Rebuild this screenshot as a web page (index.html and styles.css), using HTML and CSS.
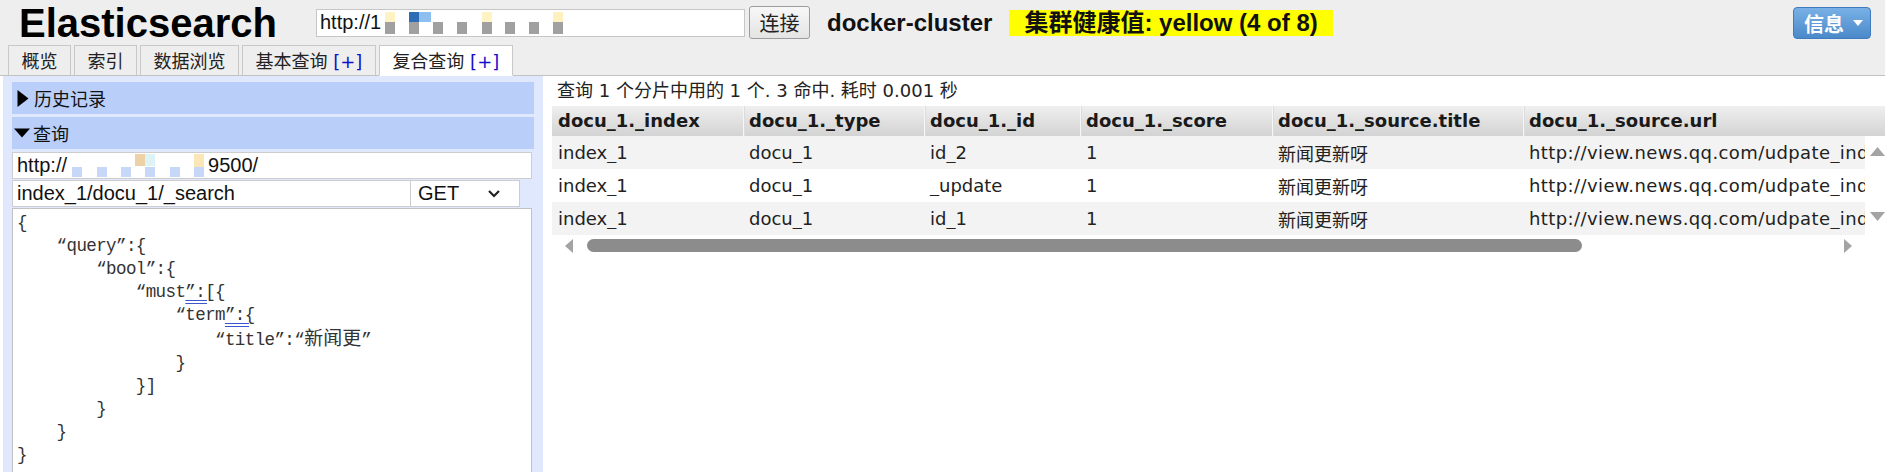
FILE: index.html
```html
<!DOCTYPE html>
<html lang="zh-CN">
<head>
<meta charset="utf-8">
<title>Elasticsearch</title>
<link rel="stylesheet" href="styles.css">
</head>
<body>
<div class="header">
  <div class="topbar">
    <h1 class="logo">Elasticsearch</h1>
    <div class="conn-input">http://1<svg class="mosaic-top" width="190" height="26" viewBox="0 0 190 26">
      <rect x="4" y="2" width="10" height="10" fill="#fff3c4"/>
      <rect x="28" y="2" width="10" height="10" fill="#2d6db5"/>
      <rect x="38" y="2" width="12" height="10" fill="#8ec0ef"/>
      <rect x="101" y="2" width="10" height="10" fill="#fff3c4"/>
      <rect x="172" y="2" width="10" height="10" fill="#fff0bf"/>
      <rect x="4" y="12" width="10" height="12" fill="#a0a0a0"/>
      <rect x="28" y="12" width="10" height="12" fill="#a0a0a0"/>
      <rect x="52" y="12" width="10" height="12" fill="#a0a0a0"/>
      <rect x="76" y="12" width="10" height="12" fill="#a0a0a0"/>
      <rect x="101" y="12" width="10" height="12" fill="#a0a0a0"/>
      <rect x="124" y="12" width="10" height="12" fill="#a0a0a0"/>
      <rect x="148" y="12" width="10" height="12" fill="#a0a0a0"/>
      <rect x="172" y="12" width="10" height="12" fill="#a0a0a0"/>
    </svg></div>
    <button class="btn-connect">连接</button>
    <span class="cluster-name">docker-cluster</span>
    <span class="health">集群健康值: yellow (4 of 8)</span>
    <button class="btn-info">信息<svg class="caret" width="10" height="6" viewBox="0 0 10 6"><path d="M0 0 L10 0 L5 6 Z" fill="#fff"/></svg></button>
  </div>
  <div class="tabs">
    <div class="tab">概览</div>
    <div class="tab">索引</div>
    <div class="tab">数据浏览</div>
    <div class="tab">基本查询 <span class="plus">[+]</span></div>
    <div class="tab active">复合查询 <span class="plus">[+]</span></div>
  </div>
</div>

<div class="main">
  <div class="side">
    <div class="section"><svg class="tri tri-right" width="12" height="17" viewBox="0 0 12 17"><path d="M0.5 0 L11.5 8.5 L0.5 17 Z" fill="#000"/></svg>历史记录</div>
    <div class="section"><svg class="tri tri-down" width="16" height="10" viewBox="0 0 16 10"><path d="M0 0.5 L16 0.5 L8 9.5 Z" fill="#000"/></svg>查询</div>
    <div class="field url">http://<svg class="mosaic-left" width="141" height="25" viewBox="0 0 141 25">
      <rect x="5" y="14" width="10" height="10" fill="#c6d7f8"/>
      <rect x="30" y="14" width="10" height="10" fill="#c6d7f8"/>
      <rect x="54" y="14" width="10" height="10" fill="#c6d7f8"/>
      <rect x="78" y="14" width="10" height="10" fill="#c6d7f8"/>
      <rect x="103" y="14" width="10" height="10" fill="#c6d7f8"/>
      <rect x="127" y="14" width="10" height="10" fill="#c6d7f8"/>
      <rect x="68" y="1" width="10" height="12" fill="#ecd2a6"/>
      <rect x="78" y="1" width="10" height="12" fill="#def3f5"/>
      <rect x="127" y="1" width="10" height="13" fill="#fbe6b8"/>
    </svg>9500/</div>
    <div class="path-row">
      <div class="field path">index_1/docu_1/_search</div>
      <div class="select">GET<svg class="chev" width="14" height="9" viewBox="0 0 14 9"><path d="M2 2 L7 7 L12 2" fill="none" stroke="#222" stroke-width="2.2"/></svg></div>
    </div>
<pre class="editor">{
    “query”:{
        “bool”:{
            “must<span class="ul">”:[</span>{
                “term<span class="ul">”:{</span>
                    “title”:“<span class="cjk">新闻更</span>”
                }
            }]
        }
    }
}</pre>
  </div>

  <div class="results">
    <div class="status">查询 1 个分片中用的 1 个. 3 命中. 耗时 0.001 秒</div>
    <div class="table">
      <div class="row head">
        <div class="cell">docu_1._index</div>
        <div class="cell">docu_1._type</div>
        <div class="cell">docu_1._id</div>
        <div class="cell">docu_1._score</div>
        <div class="cell">docu_1._source.title</div>
        <div class="cell">docu_1._source.url</div>
      </div>
      <div class="body-area">
        <div class="rows">
          <div class="row odd">
            <div class="cell">index_1</div>
            <div class="cell">docu_1</div>
            <div class="cell">id_2</div>
            <div class="cell">1</div>
            <div class="cell">新闻更新呀</div>
            <div class="cell url-cell">http://view.news.qq.com/udpate_index</div>
          </div>
          <div class="row">
            <div class="cell">index_1</div>
            <div class="cell">docu_1</div>
            <div class="cell">_update</div>
            <div class="cell">1</div>
            <div class="cell">新闻更新呀</div>
            <div class="cell url-cell">http://view.news.qq.com/udpate_index</div>
          </div>
          <div class="row odd">
            <div class="cell">index_1</div>
            <div class="cell">docu_1</div>
            <div class="cell">id_1</div>
            <div class="cell">1</div>
            <div class="cell">新闻更新呀</div>
            <div class="cell url-cell">http://view.news.qq.com/udpate_index</div>
          </div>
        </div>
        <div class="vscroll">
          <svg width="15" height="9" viewBox="0 0 15 9"><path d="M0 9 L7.5 0 L15 9 Z" fill="#a3a3a3"/></svg>
          <svg width="15" height="9" viewBox="0 0 15 9"><path d="M0 0 L15 0 L7.5 9 Z" fill="#a3a3a3"/></svg>
        </div>
      </div>
      <div class="hscroll">
        <svg width="8" height="14" viewBox="0 0 8 14"><path d="M8 0 L0 7 L8 14 Z" fill="#a3a3a3"/></svg>
        <div class="thumb"></div>
        <svg class="right-arrow" width="8" height="14" viewBox="0 0 8 14"><path d="M0 0 L8 7 L0 14 Z" fill="#a3a3a3"/></svg>
      </div>
    </div>
  </div>
</div>
</body>
</html>
```

FILE: styles.css
```css
* { box-sizing: border-box; }

html, body {
  margin: 0;
  padding: 0;
  overflow: hidden;
  background: #fff;
}

body {
  width: 1885px;
  height: 472px;
  font-family: "DejaVu Sans", "Noto Sans CJK SC", sans-serif;
  font-size: 18px;
  color: #222;
}

/* ---------- header ---------- */
.header {
  background: #eeeeee;
  border-bottom: 1px solid #c2c2c2;
  height: 76px;
}

.topbar {
  display: flex;
  align-items: center;
  height: 45px;
  padding-left: 19px;
}

.logo {
  margin: 0;
  flex: 0 0 297px;
  font: bold 40px/44px "Liberation Sans", "Noto Sans CJK SC", sans-serif;
  color: #000;
}

.conn-input {
  display: flex;
  align-items: center;
  width: 429px;
  height: 28px;
  background: #fff;
  border: 1px solid #c6c6c6;
  padding-left: 3px;
  font: 20px "Liberation Sans", sans-serif;
  color: #111;
}

.mosaic-top { display: block; }

.btn-connect {
  margin-left: 4px;
  width: 61px;
  height: 33px;
  padding: 0;
  border: 1px solid #9c9c9c;
  border-radius: 3px;
  background: linear-gradient(#f7f7f7, #e4e4e4);
  font: 20px "Noto Sans CJK SC", sans-serif;
  color: #222;
}

.cluster-name {
  margin-left: 17px;
  font: bold 24px "Liberation Sans", "Noto Sans CJK SC", sans-serif;
  color: #111;
}

.health {
  margin-left: 17px;
  height: 26px;
  padding: 0 15px;
  background: #ffff00;
  font: bold 24px/26px "Liberation Sans", "Noto Sans CJK SC", sans-serif;
  color: #111;
}

.btn-info {
  margin-left: auto;
  margin-right: 14px;
  margin-top: 1px;
  width: 78px;
  height: 32px;
  padding: 0 0 0 10px;
  display: flex;
  align-items: center;
  gap: 9px;
  border: 1px solid #3f7cbf;
  border-radius: 4px;
  background: linear-gradient(#79b1e6, #4a89c9);
  font: bold 20px "Noto Sans CJK SC", sans-serif;
  color: #fff;
}

.caret { display: block; }

.tabs {
  display: flex;
  gap: 3px;
  padding-left: 8px;
  height: 31px;
}

.tab {
  height: 31px;
  padding: 0 12.5px;
  border: 1px solid #c8c8c8;
  border-bottom-color: #c2c2c2;
  background: #eeeeee;
  font-size: 18px;
  line-height: 31px;
  color: #222;
  white-space: nowrap;
}

.tab.active {
  background: #fff;
  border-bottom-color: #fff;
}

.plus { color: #1010cc; }

/* ---------- main ---------- */
.main {
  display: flex;
  height: 396px;
  padding-left: 3px;
}

.side {
  flex: 0 0 540px;
  background: #dfe8fc;
  padding: 6px 9px 0 9px;
  display: flex;
  flex-direction: column;
  overflow: hidden;
}

.section {
  flex: 0 0 32px;
  display: flex;
  align-items: center;
  gap: 5px;
  padding-left: 5px;
  margin-bottom: 3px;
  background: #b9cffa;
  font-size: 18px;
  color: #111;
}

.section .tri { display: block; }
.section .tri-down { margin-left: -3px; margin-right: -2px; }

.field {
  display: flex;
  align-items: center;
  height: 27px;
  background: #fff;
  border: 1px solid #cdcdcd;
  padding-left: 4px;
  font: 20px "Liberation Sans", sans-serif;
  color: #111;
  white-space: nowrap;
}

.field.url { flex: 0 0 27px; width: 520px; }
.mosaic-left { display: block; }

.path-row {
  display: flex;
  flex: 0 0 27px;
  margin-top: 1px;
}

.field.path { width: 399px; }

.select {
  width: 109px;
  height: 27px;
  display: flex;
  align-items: center;
  justify-content: space-between;
  padding: 0 18px 0 7px;
  background: #fff;
  border: 1px solid #cdcdcd;
  border-left: none;
  font: 20px "Liberation Sans", sans-serif;
  color: #111;
}

.chev { display: block; }

.editor {
  margin: 1px 0 0 0;
  width: 520px;
  flex: 0 0 300px;
  padding: 3px 4px;
  background: #fff;
  border: 1px solid #c3c3c3;
  font: 17.5px/23px "Liberation Mono", "Noto Sans CJK SC", monospace;
  letter-spacing: -0.6px;
  color: #333;
  white-space: pre;
}

.editor .cjk {
  font-family: "Noto Sans CJK SC", sans-serif;
  font-size: 19px;
  line-height: 1;
  letter-spacing: 0;
}

.editor .ul {
  text-decoration: underline double #3a56d0;
  text-underline-offset: 3px;
}

/* ---------- results ---------- */
.results {
  flex: 1;
  min-width: 0;
  padding-left: 9px;
  overflow: hidden;
}

.status {
  height: 30px;
  line-height: 30px;
  padding-left: 5px;
  font-size: 18px;
  color: #222;
  white-space: nowrap;
}

.table { width: 1333px; }

.row {
  display: grid;
  grid-template-columns: 191px 181px 156px 192px 251px 1fr;
  height: 33px;
  align-items: center;
  white-space: nowrap;
  overflow: hidden;
}

.row.head {
  height: 30px;
  background: linear-gradient(#efefef, #d3d3d3);
  font-weight: bold;
  color: #1a1a1a;
}

.row.head .cell { height: 30px; line-height: 30px; }
.row.head .cell + .cell {
  border-left: 1px solid #f6f6f6;
  box-shadow: inset 1px 0 0 #dcdcdc;
  padding-left: 5px;
}

.cell {
  padding-left: 6px;
  overflow: hidden;
}

.url-cell { letter-spacing: 0.4px; }

.row.odd { background: #f3f3f3; }

.body-area {
  display: flex;
}

.rows { flex: 0 0 1313px; }

.vscroll {
  flex: 0 0 20px;
  display: flex;
  flex-direction: column;
  justify-content: space-between;
  align-items: flex-end;
  padding: 11px 0 14px 0;
}

.vscroll svg { display: block; }

.hscroll {
  width: 1313px;
  height: 21px;
  display: flex;
  align-items: center;
  padding: 0 13px;
}

.hscroll svg { display: block; }

.thumb {
  margin-left: 14px;
  width: 995px;
  height: 13px;
  border-radius: 7px;
  background: #8c8c8c;
}

.right-arrow { margin-left: auto; }
```
